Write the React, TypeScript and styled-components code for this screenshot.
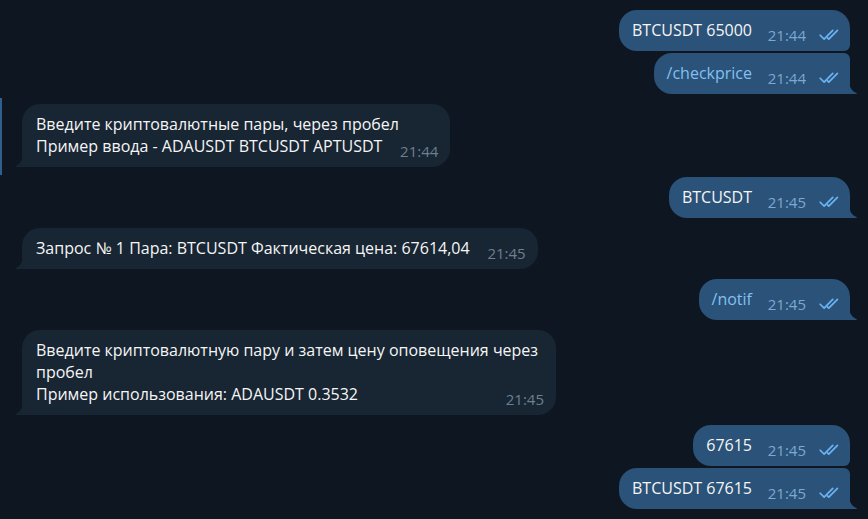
import React from "react";
import styled, { createGlobalStyle, css } from "styled-components";

const colors = {
  page: "#0e1621",
  outBubble: "#2b5278",
  inBubble: "#182533",
  text: "#f5f5f5",
  command: "#82c0f2",
  outTime: "#7da8d3",
  inTime: "#6d7f8f",
  check: "#6ab3f3",
  marker: "#2f5f8a",
};

const GlobalStyle = createGlobalStyle`
  html, body {
    margin: 0;
    padding: 0;
    background: ${colors.page};
  }
  body {
    font-family: "Open Sans", "Noto Sans", sans-serif;
    overflow: hidden;
  }
`;

const Chat = styled.div`
  width: 868px;
  height: 519px;
  box-sizing: border-box;
  padding: 10px 18px 0 0;
  display: flex;
  flex-direction: column;
  gap: 10px;
  background: ${colors.page};
`;

const Group = styled.div<{ $out?: boolean; $marked?: boolean }>`
  position: relative;
  display: flex;
  flex-direction: column;
  align-items: ${p => (p.$out ? "flex-end" : "flex-start")};
  gap: 2px;
  padding-left: ${p => (p.$out ? 0 : 22)}px;
  ${p =>
    p.$marked &&
    css`
      &::before {
        content: "";
        position: absolute;
        left: 0;
        top: -6px;
        bottom: -8px;
        width: 2px;
        background: ${colors.marker};
      }
    `}
`;

const Bubble = styled.div<{ $out?: boolean; $first: boolean; $last: boolean }>`
  position: relative;
  box-sizing: border-box;
  max-width: ${p => (p.$out ? 420 : 534)}px;
  padding: 9px ${p => (p.$out ? 10 : 12)}px 10px ${p => (p.$out ? 13 : 14)}px;
  background: ${p => (p.$out ? colors.outBubble : colors.inBubble)};
  color: ${colors.text};
  font-size: 16px;
  line-height: 22px;
  border-radius: ${p =>
    p.$out
      ? `18px ${p.$first ? 18 : 6}px ${p.$last ? 0 : 6}px 18px`
      : `${p.$first ? 18 : 6}px 18px 18px ${p.$last ? 0 : 6}px`};
`;

const Text = styled.span<{ $command?: boolean }>`
  color: ${p => (p.$command ? colors.command : colors.text)};
`;

const Spacer = styled.span<{ $out?: boolean }>`
  display: inline-block;
  width: ${p => (p.$out ? 88 : 56)}px;
  height: 1px;
`;

const Meta = styled.span<{ $out?: boolean }>`
  position: absolute;
  right: ${p => (p.$out ? 10 : 12)}px;
  bottom: 8px;
  display: flex;
  align-items: center;
  gap: 13px;
  font-size: 15px;
  line-height: 16px;
  white-space: nowrap;
  color: ${p => (p.$out ? colors.outTime : colors.inTime)};
`;

const Tail = styled.svg<{ $out?: boolean }>`
  position: absolute;
  bottom: 0;
  width: 8px;
  height: 14px;
  ${p => (p.$out ? "right: -7px;" : "left: -7px; transform: scaleX(-1);")}
`;

const Checks = () => (
  <svg width="21" height="12" viewBox="0 0 18 10" fill="none">
    <path d="M1 5.2 L4.4 8.6 L11.8 1" stroke={colors.check} strokeWidth="1.45" strokeLinecap="round" strokeLinejoin="round" />
    <path d="M7.2 7.4 L8.4 8.6 L15.8 1" stroke={colors.check} strokeWidth="1.45" strokeLinecap="round" strokeLinejoin="round" />
  </svg>
);

type Msg = { text: string; time: string };
type GroupData = { out?: boolean; marked?: boolean; msgs: Msg[] };

const groups: GroupData[] = [
  {
    out: true,
    msgs: [
      { text: "BTCUSDT 65000", time: "21:44" },
      { text: "/checkprice", time: "21:44" },
    ],
  },
  {
    marked: true,
    msgs: [
      {
        text: "Введите криптовалютные пары, через пробел\nПример ввода - ADAUSDT BTCUSDT APTUSDT",
        time: "21:44",
      },
    ],
  },
  { out: true, msgs: [{ text: "BTCUSDT", time: "21:45" }] },
  { msgs: [{ text: "Запрос № 1 Пара: BTCUSDT Фактическая цена: 67614,04", time: "21:45" }] },
  { out: true, msgs: [{ text: "/notif", time: "21:45" }] },
  {
    msgs: [
      {
        text: "Введите криптовалютную пару и затем цену оповещения через пробел\nПример использования: ADAUSDT 0.3532",
        time: "21:45",
      },
    ],
  },
  {
    out: true,
    msgs: [
      { text: "67615", time: "21:45" },
      { text: "BTCUSDT 67615", time: "21:45" },
    ],
  },
];

export default function App() {
  return (
    <>
      <GlobalStyle />
      <Chat>
        {groups.map((g, gi) => (
          <Group key={gi} $out={g.out} $marked={g.marked}>
            {g.msgs.map((m, i) => {
              const last = i === g.msgs.length - 1;
              const lines = m.text.split("\n");
              return (
                <Bubble key={i} $out={g.out} $first={i === 0} $last={last}>
                  {lines.map((line, li) => (
                    <React.Fragment key={li}>
                      {li > 0 && <br />}
                      <Text $command={line.startsWith("/")}>{line}</Text>
                    </React.Fragment>
                  ))}
                  <Spacer $out={g.out} />
                  <Meta $out={g.out}>
                    {m.time}
                    {g.out && <Checks />}
                  </Meta>
                  {last && (
                    <Tail $out={g.out} viewBox="0 0 8 14">
                      <path
                        d="M0 0 C0 7 3 11.5 7.5 13 Q8 13.3 7.6 14 L0 14 Z"
                        fill={g.out ? colors.outBubble : colors.inBubble}
                      />
                    </Tail>
                  )}
                </Bubble>
              );
            })}
          </Group>
        ))}
      </Chat>
    </>
  );
}
